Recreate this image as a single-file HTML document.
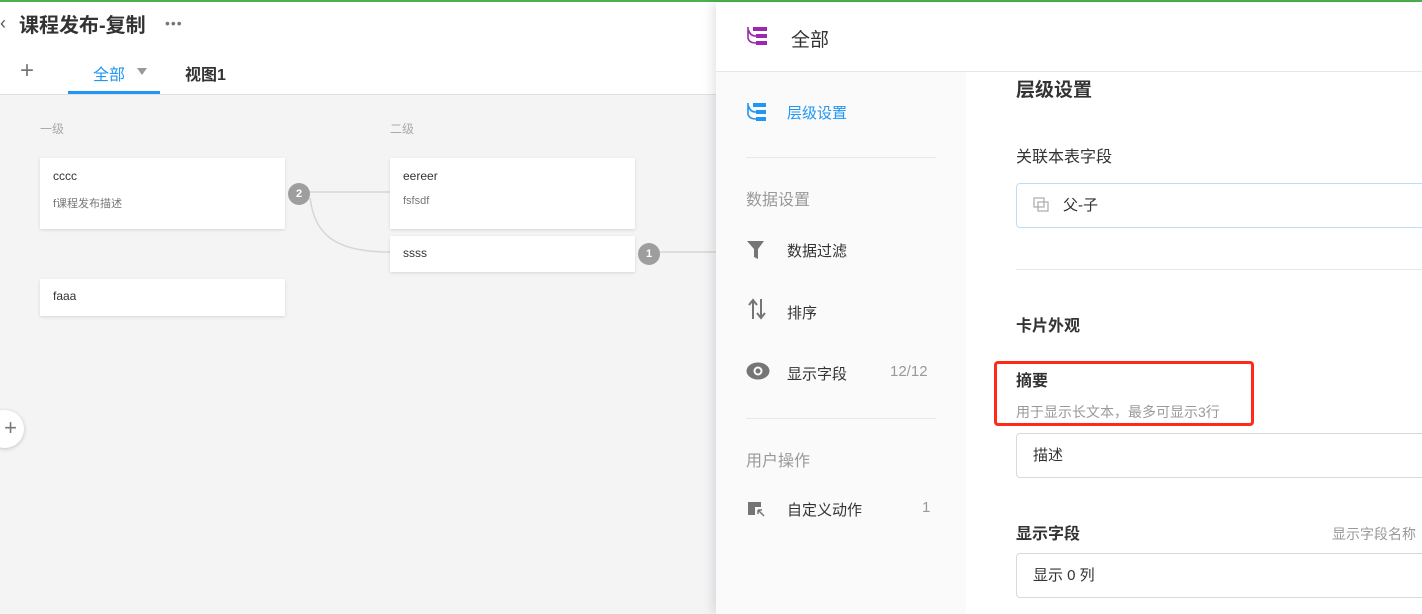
<!DOCTYPE html>
<html><head><meta charset="utf-8"><style>
*{margin:0;padding:0;box-sizing:border-box}
body{width:1422px;height:614px;overflow:hidden;position:relative;font-family:"Liberation Sans","Noto Sans CJK SC",sans-serif;background:#fff;color:#333}
.a{position:absolute}
.card{position:absolute;background:#fff;box-shadow:0 1px 3px rgba(0,0,0,.12)}
.card .t{position:absolute;left:13px;font-size:12px;color:#333}
.card .d{position:absolute;left:13px;font-size:11px;color:#777}
.badge{position:absolute;width:22px;height:22px;border-radius:50%;background:#9e9e9e;color:#fff;font-size:11px;font-weight:bold;text-align:center;line-height:22px}
.side{font-size:15px;color:#333}
.gray{color:#999}
.box{position:absolute;left:1016px;width:420px;border:1px solid #d9d9d9;border-radius:4px;font-size:15px;color:#333;padding-left:16px}
</style></head><body>
<div class="a" style="left:0;top:0;width:1422px;height:2px;background:#4caf50"></div>
<div class="a" style="left:0;top:94px;width:716px;height:520px;background:#f4f4f5;border-top:1px solid #e0e0e0"></div>
<div class="a" style="left:0;top:13px;font-size:18px;color:#555">‹</div>
<div class="a" style="left:19px;top:9px;font-size:20px;font-weight:bold;color:#333">课程发布-复制</div>
<div class="a" style="left:165px;top:15px;font-size:14px;color:#777;letter-spacing:1px">•••</div>
<div class="a" style="left:20px;top:56px;font-size:24px;color:#777;font-weight:300;line-height:30px">+</div>
<div class="a" style="left:93px;top:61px;font-size:16px;color:#2196f3">全部</div>
<div class="a" style="left:137px;top:68px;width:0;height:0;border-left:5px solid transparent;border-right:5px solid transparent;border-top:7px solid #999"></div>
<div class="a" style="left:68px;top:91px;width:92px;height:3px;background:#2196f3"></div>
<div class="a" style="left:185px;top:61px;font-size:16px;font-weight:bold;color:#333">视图1</div>
<div class="a" style="left:40px;top:120px;font-size:12px;color:#aaa">一级</div>
<div class="a" style="left:390px;top:120px;font-size:12px;color:#aaa">二级</div>
<svg class="a" style="left:0;top:0" width="716" height="614"><path d="M308 192H390M310 198C315 235 335 252 390 252M658 252H716" stroke="#d6d6d6" stroke-width="1.5" fill="none"/></svg>
<div class="card" style="left:40px;top:158px;width:245px;height:71px"><div class="t" style="top:11px">cccc</div><div class="d" style="top:37px">f课程发布描述</div></div>
<div class="card" style="left:390px;top:158px;width:245px;height:71px"><div class="t" style="top:11px">eereer</div><div class="d" style="top:37px">fsfsdf</div></div>
<div class="card" style="left:390px;top:236px;width:245px;height:36px"><div class="t" style="top:10px">ssss</div></div>
<div class="card" style="left:40px;top:279px;width:245px;height:37px"><div class="t" style="top:10px">faaa</div></div>
<div class="badge" style="left:288px;top:183px">2</div>
<div class="badge" style="left:638px;top:243px">1</div>
<div class="a" style="left:-14px;top:410px;width:38px;height:38px;border-radius:50%;background:#fff;box-shadow:0 1px 4px rgba(0,0,0,.2);font-size:22px;color:#777;text-align:right;padding-right:7px;line-height:36px">+</div>
<div class="a" style="left:716px;top:3px;width:706px;height:611px;background:#fff;box-shadow:-4px 0 10px rgba(0,0,0,.1)"></div>
<div class="a" style="left:716px;top:71px;width:706px;height:1px;background:#e6e6e6"></div>
<div class="a" style="left:716px;top:72px;width:250px;height:542px;background:#fafafa"></div>
<svg class="a" style="left:746px;top:26px" width="24" height="20"><g fill="#9c27b0"><rect x="7" y="1" width="14" height="4"/><rect x="10" y="8" width="11" height="4"/><rect x="10" y="15" width="11" height="4"/></g><path d="M2 1V12Q3 17 10 17M2.5 4Q4 10 10 10" stroke="#9c27b0" stroke-width="1.6" fill="none"/></svg>
<div class="a" style="left:791px;top:25px;font-size:19px;color:#333">全部</div>
<svg class="a" style="left:746px;top:102px" width="24" height="20"><g fill="#2196f3"><rect x="7" y="1" width="13" height="4"/><rect x="10" y="8" width="10" height="4"/><rect x="10" y="15" width="10" height="4"/></g><path d="M2 1V12Q3 17 10 17M2.5 4Q4 10 10 10" stroke="#2196f3" stroke-width="1.6" fill="none"/></svg>
<div class="a side" style="left:787px;top:102px;color:#2196f3">层级设置</div>
<div class="a" style="left:746px;top:157px;width:190px;height:1px;background:#e8e8e8"></div>
<div class="a side gray" style="left:746px;top:186px;font-size:16px">数据设置</div>
<svg class="a" style="left:747px;top:240px" width="18" height="20"><path d="M0 1H17L11 9V19L7 17V9Z" fill="#757575"/></svg>
<div class="a side" style="left:787px;top:240px">数据过滤</div>
<svg class="a" style="left:748px;top:298px" width="18" height="22"><path d="M5 21V3M1 7L5 2 9 7M13 1V19M9 15L13 20 17 15" stroke="#757575" stroke-width="2" fill="none"/></svg>
<div class="a side" style="left:787px;top:302px">排序</div>
<svg class="a" style="left:746px;top:362px" width="24" height="18"><ellipse cx="12" cy="9" rx="11.5" ry="8.5" fill="#757575"/><circle cx="12" cy="9" r="4.5" fill="#fafafa"/><circle cx="12" cy="9" r="2.5" fill="#757575"/></svg>
<div class="a side" style="left:787px;top:363px">显示字段</div>
<div class="a side gray" style="left:890px;top:363px">12/12</div>
<div class="a" style="left:746px;top:418px;width:190px;height:1px;background:#e8e8e8"></div>
<div class="a side gray" style="left:746px;top:447px;font-size:16px">用户操作</div>
<svg class="a" style="left:747px;top:501px" width="22" height="18"><path d="M1 1H14V6H8V14H1Z" fill="#757575"/><path d="M11 9L17 15M11 9V13M11 9H15" stroke="#757575" stroke-width="1.5" fill="none"/></svg>
<div class="a side" style="left:787px;top:499px">自定义动作</div>
<div class="a side gray" style="left:922px;top:499px">1</div>
<div class="a" style="left:1016px;top:75px;font-size:19px;font-weight:bold;color:#333">层级设置</div>
<div class="a" style="left:1016px;top:143px;font-size:16px;color:#333">关联本表字段</div>
<div class="box" style="top:183px;height:45px;border-color:#bbdefb;line-height:43px;padding-left:46px">父-子</div>
<svg class="a" style="left:1033px;top:197px" width="18" height="16"><rect x="1" y="1" width="10" height="9" fill="none" stroke="#aaa" stroke-width="1.2"/><rect x="5" y="5" width="10" height="9" fill="none" stroke="#aaa" stroke-width="1.2"/></svg>
<div class="a" style="left:1016px;top:269px;width:406px;height:1px;background:#e6e6e6"></div>
<div class="a" style="left:1016px;top:312px;font-size:16px;font-weight:bold;color:#333">卡片外观</div>
<div class="a" style="left:994px;top:361px;width:260px;height:65px;border:3px solid #ff2a1a;border-radius:4px"></div>
<div class="a" style="left:1016px;top:367px;font-size:16px;font-weight:bold;color:#333">摘要</div>
<div class="a" style="left:1016px;top:402px;font-size:14px;color:#999">用于显示长文本，最多可显示3行</div>
<div class="box" style="top:433px;height:45px;line-height:43px">描述</div>
<div class="a" style="left:1016px;top:520px;font-size:16px;font-weight:bold;color:#333">显示字段</div>
<div class="a" style="left:1332px;top:524px;font-size:14px;color:#999;white-space:nowrap">显示字段名称</div>
<div class="box" style="top:553px;height:45px;line-height:43px">显示 0 列</div>
</body></html>
